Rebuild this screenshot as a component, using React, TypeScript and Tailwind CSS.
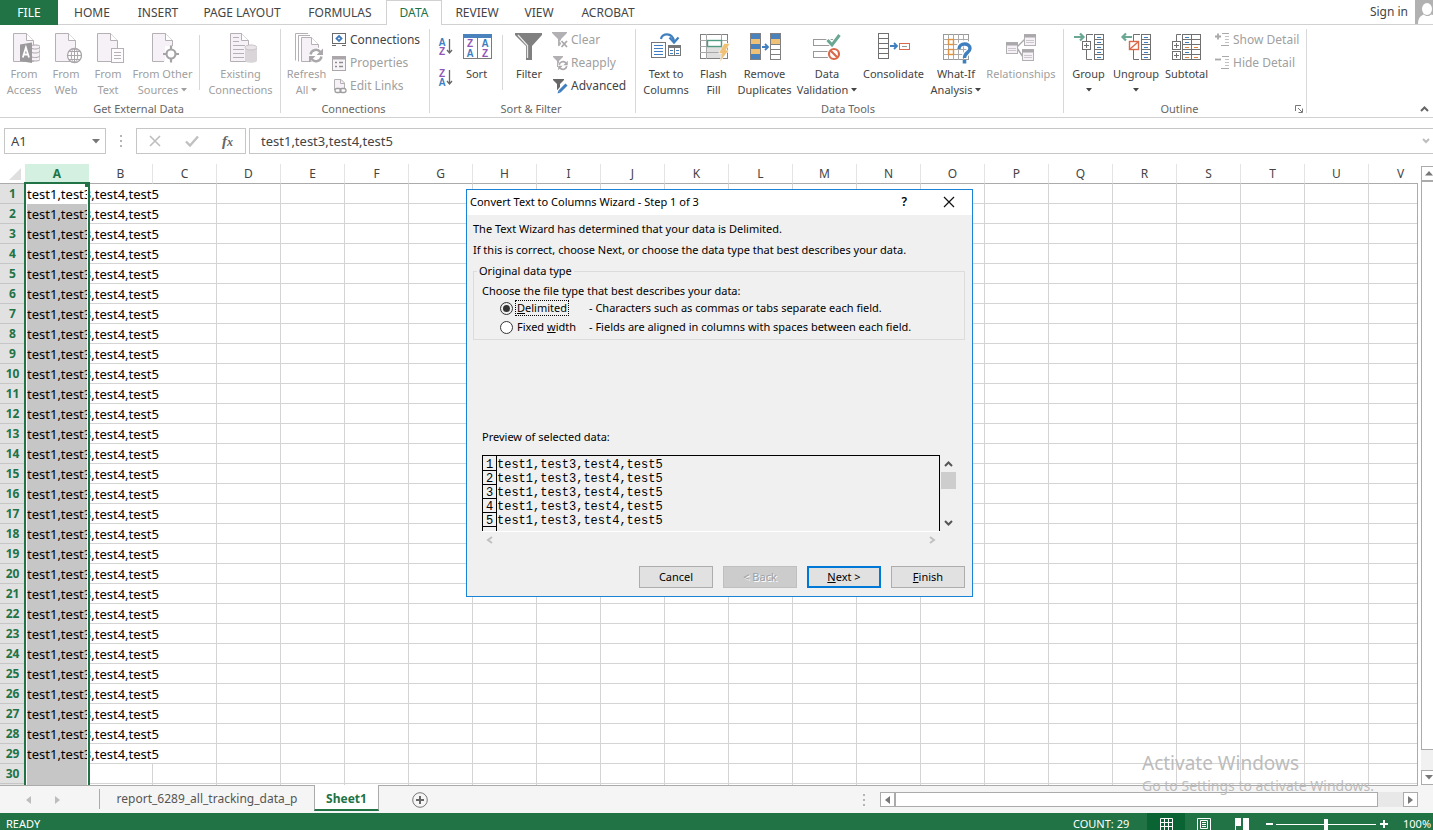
import React, { useState } from 'react';

const ROW_TEXT = 'test1,test3,test4,test5';
const FILLED_ROWS = 29;
const COLUMNS = 'ABCDEFGHIJKLMNOPQRSTUV'.split('');
const ROWS = Array.from({ length: 31 }, (_, i) => i + 1);

const TABS = [
  { label: 'HOME', width: 'w-[68px]' },
  { label: 'INSERT', width: 'w-16' },
  { label: 'PAGE LAYOUT', width: 'w-[104px]' },
  { label: 'FORMULAS', width: 'w-[92px]' },
  { label: 'DATA', width: 'w-14' },
  { label: 'REVIEW', width: 'w-[70px]' },
  { label: 'VIEW', width: 'w-[54px]' },
  { label: 'ACROBAT', width: 'w-[84px]' },
];

/* ---------- icons ---------- */

type IconProps = { children: React.ReactNode; size?: number };

const Svg = ({ children, size = 32 }: IconProps) => (
  <svg width={size} height={size} viewBox={`0 0 ${size} ${size}`} fill="none" className="shrink-0" aria-hidden="true">
    {children}
  </svg>
);

const Doc = () => (
  <>
    <path d="M5.5 1.5H18.5L25.5 8.5V29.5H5.5Z" fill="#f5f1f6" stroke="#b4b0b4" />
    <path d="M18.5 1.5V8.5H25.5" fill="#fff" stroke="#b4b0b4" />
  </>
);

const AccessIcon = () => (
  <Svg>
    <Doc />
    <path d="M23 14.5C23 12.5 32 12.5 32 14.5V27.5C32 29.5 23 29.5 23 27.5Z" fill="#f5f1f6" stroke="#a8a4a8" />
    <path d="M23 16C25 17.5 31 17.5 32 15M23 20C25 21.5 31 21.5 32 19M23 24.5C25 26 31 26 32 23.5" stroke="#a8a4a8" />
    <path d="M12 12.5L24 10.5V31L12 29Z" fill="#9b999b" />
    <path d="M14.8 25.5L17.9 15.5L21 25.5M15.8 22.5H20" stroke="#fff" strokeWidth="1.8" />
  </Svg>
);

const WebIcon = () => (
  <Svg>
    <Doc />
    <circle cx="24.5" cy="23.5" r="7" fill="#fff" stroke="#aaa6aa" strokeWidth="1.3" />
    <ellipse cx="24.5" cy="23.5" rx="3.2" ry="7" stroke="#aaa6aa" />
    <path d="M24.5 16.5V30.5M17.5 23.5H31.5M18.8 19.5H30.2M18.8 27.5H30.2" stroke="#aaa6aa" />
  </Svg>
);

const TextIcon = () => (
  <Svg>
    <Doc />
    <rect x="19.5" y="16.5" width="12" height="14" fill="#fdfbfd" stroke="#b4b0b4" />
    <path d="M22 20.5H29M22 23.5H29M22 26.5H29" stroke="#b4b0b4" />
  </Svg>
);

const SourcesIcon = () => (
  <Svg>
    <Doc />
    <path d="M17 14H31V31H17Z" fill="#fff" />
    <path d="M17.5 14V29.5" stroke="#f5f1f6" />
    <circle cx="24" cy="22" r="4.5" fill="#fff" stroke="#a5a3a5" strokeWidth="2.2" />
    <path d="M24 13.5V18M24 26V30.5M16 22H20M28 22H32" stroke="#a5a3a5" strokeWidth="2.2" />
  </Svg>
);

const ExistingIcon = () => (
  <Svg>
    <path d="M5.5 1.5H16.5L23.5 8.5V29.5H5.5Z" fill="#f5f1f6" stroke="#b4b0b4" />
    <path d="M16.5 1.5V8.5H23.5" fill="#fff" stroke="#b4b0b4" />
    <path d="M8 5.5H14M8 9.5H14M8 13.5H20M8 17.5H19M8 21.5H19M8 25.5H19" stroke="#b4b0b4" />
    <path d="M20 15.5V28.5C20 31.5 32 31.5 32 28.5V15.5Z" fill="#d9d5d9" />
    <ellipse cx="26" cy="15.5" rx="6" ry="2.5" fill="#e8e4e8" stroke="#c6c2c6" />
  </Svg>
);

const Cycle = ({ x, y, s = 1 }: { x: number; y: number; s?: number }) => (
  <g transform={`translate(${x} ${y}) scale(${s})`}>
    <path d="M-5.5 -1A5.6 5.6 0 0 1 4.4 -3.6M5.5 1A5.6 5.6 0 0 1 -4.4 3.6" stroke="#aaa8aa" strokeWidth="2.4" />
    <path d="M7 -7V-0.5H0.5ZM-7 7V0.5H-0.5Z" fill="#aaa8aa" />
  </g>
);

const RefreshIcon = () => (
  <Svg>
    <path d="M4.5 28.5V1.5H17M7.5 29.5V3.5H19" stroke="#b4b0b4" />
    <path d="M10.5 5.5H20.5L27.5 12.5V29.5H10.5Z" fill="#f5f1f6" stroke="#b4b0b4" />
    <path d="M20.5 5.5V12.5H27.5" fill="#fff" stroke="#b4b0b4" />
    <circle cx="26" cy="23.5" r="8" fill="#fff" />
    <Cycle x={25} y={23.5} />
  </Svg>
);

const ConnectionsIcon = () => (
  <Svg size={16}>
    <rect x="1.5" y="1.5" width="13" height="10" fill="#fff" stroke="#6a6a6a" />
    <path d="M1 13.5H5M11 13.5H15" stroke="#6a6a6a" />
    <path d="M8 4L10.5 6.5L8 9L5.5 6.5Z" stroke="#3f7abb" strokeWidth="1.8" />
  </Svg>
);

const PropertiesIcon = () => (
  <Svg size={16}>
    <rect x="1.5" y="1.5" width="13" height="14" fill="#f8f5f8" stroke="#aaa6aa" />
    <path d="M1 3H15" stroke="#aaa6aa" strokeWidth="3" />
    <path d="M4 7.5H6M4 11.5H6M8 7.5H12M8 11.5H12" stroke="#8f8c8f" strokeWidth="1.4" />
  </Svg>
);

const LinksIcon = () => (
  <Svg size={16}>
    <path d="M3.5 12V1.5H10L13.5 5V10" fill="#f5f1f6" stroke="#b4b0b4" />
    <path d="M9.5 1.5V5.5H13.5" stroke="#b4b0b4" />
    <rect x="4" y="10.5" width="6" height="4" rx="2" fill="#fff" stroke="#a09da0" strokeWidth="1.3" />
    <rect x="9" y="10.5" width="6" height="4" rx="2" stroke="#a09da0" strokeWidth="1.3" />
  </Svg>
);

const Glyph = ({ x, y, letter }: { x: number; y: number; letter: 'A' | 'Z' }) => (
  <text
    x={x}
    y={y}
    fontSize="10"
    fontWeight="700"
    textAnchor="middle"
    fill={letter === 'A' ? '#3f7fbf' : '#9055b5'}
    fontFamily="Liberation Sans, sans-serif"
  >
    {letter}
  </text>
);

const SortOrderIcon = ({ descending = false }: { descending?: boolean }) => (
  <svg width="16" height="20" viewBox="0 0 16 20" fill="none" aria-hidden="true">
    <Glyph x={4} y={9} letter={descending ? 'Z' : 'A'} />
    <Glyph x={4} y={18} letter={descending ? 'A' : 'Z'} />
    <path d="M11.5 2V16M9 13L11.5 16L14 13" stroke="#666" strokeWidth="1.3" />
  </svg>
);

const SortIcon = () => (
  <Svg>
    <rect x="2.5" y="2.5" width="28" height="24" fill="#fff" stroke="#7a7a7a" />
    <path d="M2 4H31" stroke="#4a82bd" strokeWidth="4" />
    <path d="M16.5 6V26" stroke="#7a7a7a" />
    <Glyph x={9} y={15} letter="Z" />
    <Glyph x={9} y={25} letter="A" />
    <Glyph x={24} y={15} letter="A" />
    <Glyph x={24} y={25} letter="Z" />
  </Svg>
);

const FilterIcon = () => (
  <Svg>
    <path d="M2 1H29V3L19 14V28H13V14L2 3Z" fill="#808080" />
    <path d="M5 3L14.5 13.5V26" stroke="#e8e8e8" strokeWidth="1.3" />
  </Svg>
);

const ClearIcon = () => (
  <Svg size={16}>
    <path d="M0 0H15V1L9 7V14H6V7L0 1Z" fill="#b3b0b3" />
    <path d="M9 8L15 15M15 8L9 15" stroke="#fff" strokeWidth="4" />
    <path d="M9.5 9L15 15M15 9L9.5 15" stroke="#aaa8aa" strokeWidth="1.8" />
  </Svg>
);

const ReapplyIcon = () => (
  <Svg size={16}>
    <path d="M1 1H11V2L7 6V12H5V6L1 2Z" fill="#b3b0b3" />
    <circle cx="11" cy="10.5" r="5" fill="#fff" />
    <Cycle x={11} y={10.5} s={0.68} />
  </Svg>
);

const AdvancedIcon = () => (
  <Svg size={16}>
    <path d="M1 1H12V2L8 6V12H5V6L1 2Z" fill="#666" />
    <path d="M6 15L15 5" stroke="#fff" strokeWidth="5" />
    <path d="M7.5 13.5L14.5 6.5" stroke="#3f7fbf" strokeWidth="3" />
    <path d="M5.5 15.5L6.5 12.5L8.5 14.5Z" fill="#3f7fbf" />
  </Svg>
);

const TextToColumnsIcon = () => (
  <Svg>
    <path d="M11 7C12 1 22 0 24 9" stroke="#3f7fbf" strokeWidth="2.2" />
    <path d="M19.5 5.5L24 10.5L28.5 5.5" stroke="#3f7fbf" strokeWidth="2.2" />
    <rect x="1.5" y="10.5" width="14" height="15" fill="#fff" stroke="#777" />
    <path d="M4 13.5H13M4 16.5H13M4 19.5H13M4 22.5H13" stroke="#3f7fbf" />
    <rect x="18.5" y="13.5" width="12" height="10" fill="#fff" stroke="#777" />
    <path d="M18 14.5H31" stroke="#777" strokeWidth="3" />
    <path d="M24.5 14V24" stroke="#777" />
    <path d="M20 18.5H23M26 18.5H29M20 21.5H23M26 21.5H29" stroke="#3f7fbf" />
  </Svg>
);

const FlashFillIcon = () => (
  <Svg>
    <rect x="2.5" y="2.5" width="27" height="24" fill="#fff" stroke="#808080" />
    <rect x="9" y="15" width="14" height="11" fill="#dedede" />
    <path d="M2 8.5H30M2 14.5H30M2 20.5H30M8.5 2V27M23.5 2V27" stroke="#a8a8a8" />
    <rect x="9.5" y="8.5" width="14" height="6" fill="#fff" stroke="#4f9c82" strokeWidth="1.4" />
    <path d="M26 11.5H32L28 18H31L21.5 30.5L24 21.5H20.5Z" fill="#eec177" stroke="#fff" strokeWidth="0.6" />
  </Svg>
);

const RemoveDuplicatesIcon = () => (
  <Svg>
    <rect x="1.5" y="1.5" width="10" height="26" fill="#4a82bd" stroke="#808080" />
    <path d="M2 7H11V12H2ZM2 17H11V22H2Z" fill="#eec177" />
    <path d="M13 15H19M16 12L19 15L16 18" stroke="#3f7fbf" strokeWidth="1.8" />
    <rect x="21.5" y="1.5" width="10" height="26" fill="#fff" stroke="#808080" />
    <path d="M22 2H31V7H22Z" fill="#4a82bd" />
    <path d="M22 7H31V12H22Z" fill="#eec177" />
    <path d="M22 12.5H31M22 17.5H31M22 22.5H31" stroke="#808080" />
  </Svg>
);

const DataValidationIcon = () => (
  <Svg>
    <rect x="2.5" y="7.5" width="20" height="6" fill="#fff" stroke="#999" />
    <rect x="2.5" y="19.5" width="16" height="6" fill="#fff" stroke="#999" />
    <path d="M16 7L21 13L29 2.5" stroke="#fff" strokeWidth="5" />
    <path d="M16.5 8L21 13L28.5 3" stroke="#6aa892" strokeWidth="3" />
    <circle cx="23" cy="22" r="7" fill="#fff" />
    <circle cx="23" cy="22" r="5" stroke="#d9694a" strokeWidth="2.2" />
    <path d="M19.5 18.5L26.5 25.5" stroke="#d9694a" strokeWidth="2.2" />
  </Svg>
);

const ConsolidateIcon = () => (
  <Svg>
    <rect x="0.5" y="1.5" width="10" height="25" fill="#fff" stroke="#707070" />
    <path d="M0 6.5H11M0 11.5H11M0 16.5H11M0 21.5H11" stroke="#707070" />
    <path d="M12 14H18M16 11L19 14L16 17" stroke="#3f7fbf" strokeWidth="1.8" />
    <rect x="21.5" y="11.5" width="10" height="6" fill="#fff" stroke="#d9694a" />
    <path d="M24 14.5H29" stroke="#999" />
  </Svg>
);

const WhatIfIcon = () => (
  <Svg>
    <rect x="3.5" y="2.5" width="25" height="25" fill="#fff" stroke="#999" />
    <path d="M3 7.5H29M3 12.5H29M3 17.5H29M3 22.5H29M8.5 2V28M13.5 2V28M18.5 2V28M23.5 2V28" stroke="#aaa" />
    <rect x="8.5" y="7.5" width="5" height="5" fill="#fff" stroke="#e0923f" strokeWidth="1.4" />
    <rect x="8.5" y="17.5" width="5" height="5" fill="#fff" stroke="#e0923f" strokeWidth="1.4" />
    <path d="M19 17C19 9 30 10 30 16.5C30 21 24.5 20 24.5 26M24.5 28V31" stroke="#fff" strokeWidth="6" />
    <path d="M19 17C19 10.5 30 10.5 30 16.5C30 20.5 24.5 20.5 24.5 26" stroke="#3f7fbf" strokeWidth="3.4" />
    <path d="M24.5 28V31.5" stroke="#3f7fbf" strokeWidth="3.6" />
  </Svg>
);

const RelationshipsIcon = () => (
  <Svg>
    <path d="M12 15L20 7M12 16L18 25" stroke="#aaa8aa" strokeWidth="1.4" />
    <g fill="#f5f1f6" stroke="#b3b0b3">
      <rect x="1.5" y="10.5" width="11" height="11" />
      <rect x="19.5" y="2.5" width="11" height="11" />
      <rect x="17.5" y="17.5" width="11" height="11" />
    </g>
    <path d="M1 12H13M19 4H31M17 19H29" stroke="#aaa8aa" strokeWidth="3" />
    <path d="M3 16.5H11M3 18.5H11M21 8.5H29M21 10.5H29M19 23.5H27M19 25.5H27" stroke="#cbc8cb" />
  </Svg>
);

const OutlineRows = () => (
  <>
    <path d="M20 2.5H13.5V9M13.5 18V27.5H19" stroke="#707070" />
    <rect x="21.5" y="2.5" width="9" height="25" fill="#fff" stroke="#707070" />
    <path d="M21 7.5H31M21 12.5H31M21 17.5H31M21 22.5H31" stroke="#707070" />
    <path d="M24 5.5H28M24 10.5H28M24 15.5H28M24 20.5H28M24 25.5H28" stroke="#3f7fbf" />
  </>
);

const GroupIcon = () => (
  <Svg>
    <OutlineRows />
    <path d="M1 5H10M7 1.5L10.5 5L7 8.5" stroke="#6aa892" strokeWidth="2.2" />
    <rect x="9.5" y="9.5" width="8" height="8" fill="#fff" stroke="#707070" />
    <path d="M11 13.5H16M13.5 11V16" stroke="#707070" />
  </Svg>
);

const UngroupIcon = () => (
  <Svg>
    <OutlineRows />
    <path d="M2.5 5H12M6 1.5L2.5 5L6 8.5" stroke="#6aa892" strokeWidth="2.2" />
    <rect x="9.5" y="9.5" width="9" height="8" fill="#fff" stroke="#d9694a" strokeWidth="1.4" />
    <path d="M10 17L18 10" stroke="#d9694a" strokeWidth="1.4" />
  </Svg>
);

const SubtotalIcon = () => (
  <Svg>
    <path d="M10 2.5H5.5V9M10 17.5H5.5" stroke="#707070" />
    <rect x="11.5" y="2.5" width="18" height="25" fill="#fff" stroke="#707070" />
    <path d="M11 7.5H30M11 12.5H30M11 17.5H30M11 22.5H30M20.5 2V28" stroke="#707070" />
    <path d="M14 5.5H18M14 10.5H18M14 20.5H18" stroke="#3f7fbf" />
    <path d="M14 15.5H18M23 15.5H27M14 25.5H18M23 25.5H27" stroke="#e0823f" />
    <rect x="1.5" y="9.5" width="8" height="8" fill="#fff" stroke="#707070" />
    <rect x="1.5" y="19.5" width="8" height="8" fill="#fff" stroke="#707070" />
    <path d="M3 13.5H8M5.5 11V16M3 23.5H8M5.5 21V26" stroke="#707070" />
  </Svg>
);

const DetailIcon = ({ plus = false }: { plus?: boolean }) => (
  <Svg size={16}>
    <path d={plus ? 'M1 4.5H7M4 1.5V7.5' : 'M1 4.5H7'} stroke="#aaa8aa" strokeWidth="1.8" />
    <path d="M8 1.5H15M7 13.5H15" stroke="#aaa8aa" />
    <path d="M11 4.5H15M11 7.5H15M11 10.5H15" stroke="#c4c2c4" />
  </Svg>
);

const Caret = () => (
  <svg width="6" height="4" viewBox="0 0 6 4" className="inline-block shrink-0" aria-hidden="true">
    <path d="M0 0H6L3 3.5Z" fill="currentColor" />
  </svg>
);

/* ---------- ribbon ---------- */

type BigButtonProps = {
  icon: React.ReactNode;
  lines: string[];
  width: string;
  caret?: boolean;
  disabled?: boolean;
};

const BigButton = ({ icon, lines, width, caret, disabled }: BigButtonProps) => (
  <button
    type="button"
    disabled={disabled}
    className={`${width} flex shrink-0 flex-col items-center pt-[7px] text-[11px] leading-4 text-[#444] disabled:text-[#a0a0a0]`}
  >
    {icon}
    <span className="mt-[2px] whitespace-nowrap">{lines[0]}</span>
    <span className="flex h-4 items-center gap-[3px] whitespace-nowrap">
      {lines[1]}
      {caret && <Caret />}
    </span>
  </button>
);

type SmallButtonProps = { icon: React.ReactNode; label: string; disabled?: boolean };

const SmallButton = ({ icon, label, disabled }: SmallButtonProps) => (
  <button
    type="button"
    disabled={disabled}
    className="flex h-[23px] items-center gap-[3px] whitespace-nowrap text-xs text-[#444] disabled:text-[#a0a0a0]"
  >
    {icon}
    {label}
  </button>
);

const Divider = () => <div className="mx-[3px] mt-[10px] h-[55px] w-px shrink-0 bg-[#d8d8d8]" />;

type GroupProps = { title: string; width: string; launcher?: boolean; children: React.ReactNode };

const RibbonGroup = ({ title, width, launcher, children }: GroupProps) => (
  <section className={`${width} flex shrink-0 flex-col`}>
    <div className="flex h-[88px]">
      <div className="flex h-[76px] min-w-0 flex-1">{children}</div>
      <div className="mt-1 h-[84px] w-px bg-[#d8d8d8]" />
    </div>
    <div className="-mt-3 flex h-4 items-center pr-1 text-[11px] text-[#666]">
      <span className="flex-1 text-center">{title}</span>
      {launcher && (
        <button type="button" aria-label={`${title} settings`}>
          <svg width="8" height="8" viewBox="0 0 8 8" fill="none" aria-hidden="true">
            <path d="M0.5 6V0.5H6M3 3L7 7M7.5 3.5V7.5H3.5" stroke="#777" />
          </svg>
        </button>
      )}
    </div>
  </section>
);

const Ribbon = () => (
  <div className="flex h-[93px] shrink-0 border-b border-[#d1d1d1] bg-white">
    <RibbonGroup title="Get External Data" width="w-[281px]">
      <div className="w-[3px]" />
      <BigButton icon={<AccessIcon />} lines={['From', 'Access']} width="w-[42px]" disabled />
      <BigButton icon={<WebIcon />} lines={['From', 'Web']} width="w-[42px]" disabled />
      <BigButton icon={<TextIcon />} lines={['From', 'Text']} width="w-[42px]" disabled />
      <BigButton icon={<SourcesIcon />} lines={['From Other', 'Sources']} width="w-[67px]" caret disabled />
      <Divider />
      <BigButton icon={<ExistingIcon />} lines={['Existing', 'Connections']} width="w-[75px]" disabled />
    </RibbonGroup>

    <RibbonGroup title="Connections" width="w-[149px]">
      <div className="w-1" />
      <BigButton icon={<RefreshIcon />} lines={['Refresh', 'All']} width="w-[43px]" caret disabled />
      <div className="flex flex-col pt-[3px] pl-[3px]">
        <SmallButton icon={<ConnectionsIcon />} label="Connections" />
        <SmallButton icon={<PropertiesIcon />} label="Properties" disabled />
        <SmallButton icon={<LinksIcon />} label="Edit Links" disabled />
      </div>
    </RibbonGroup>

    <RibbonGroup title="Sort & Filter" width="w-[206px]">
      <div className="flex w-6 flex-col items-end gap-[11px] pt-3">
        <button type="button" aria-label="Sort A to Z"><SortOrderIcon /></button>
        <button type="button" aria-label="Sort Z to A"><SortOrderIcon descending /></button>
      </div>
      <BigButton icon={<SortIcon />} lines={['Sort']} width="w-[45px]" />
      <Divider />
      <BigButton icon={<FilterIcon />} lines={['Filter']} width="w-[46px]" />
      <div className="flex flex-col pt-[3px]">
        <SmallButton icon={<ClearIcon />} label="Clear" disabled />
        <SmallButton icon={<ReapplyIcon />} label="Reapply" disabled />
        <SmallButton icon={<AdvancedIcon />} label="Advanced" />
      </div>
    </RibbonGroup>

    <RibbonGroup title="Data Tools" width="w-[428px]">
      <div className="w-1" />
      <BigButton icon={<TextToColumnsIcon />} lines={['Text to', 'Columns']} width="w-[52px]" />
      <BigButton icon={<FlashFillIcon />} lines={['Flash', 'Fill']} width="w-[43px]" />
      <BigButton icon={<RemoveDuplicatesIcon />} lines={['Remove', 'Duplicates']} width="w-[59px]" />
      <BigButton icon={<DataValidationIcon />} lines={['Data', 'Validation']} width="w-[66px]" caret />
      <BigButton icon={<ConsolidateIcon />} lines={['Consolidate']} width="w-[67px]" />
      <BigButton icon={<WhatIfIcon />} lines={['What-If', 'Analysis']} width="w-[58px]" caret />
      <BigButton icon={<RelationshipsIcon />} lines={['Relationships']} width="w-[72px]" disabled />
    </RibbonGroup>

    <RibbonGroup title="Outline" width="w-[243px]" launcher>
      <div className="w-[2px]" />
      <BigButton icon={<GroupIcon />} lines={['Group', '']} width="w-[45px]" caret />
      <BigButton icon={<UngroupIcon />} lines={['Ungroup', '']} width="w-[50px]" caret />
      <BigButton icon={<SubtotalIcon />} lines={['Subtotal']} width="w-[51px]" />
      <div className="flex flex-col pt-[3px] pl-[2px]">
        <SmallButton icon={<DetailIcon plus />} label="Show Detail" disabled />
        <SmallButton icon={<DetailIcon />} label="Hide Detail" disabled />
      </div>
    </RibbonGroup>

    <button type="button" aria-label="Collapse the ribbon" className="mt-auto mr-1 mb-[5px] ml-auto">
      <svg width="9" height="6" viewBox="0 0 9 6" fill="none" aria-hidden="true">
        <path d="M1 5L4.5 1.5L8 5" stroke="#666" strokeWidth="2" />
      </svg>
    </button>
  </div>
);

const TabStrip = () => {
  const [active, setActive] = useState('DATA');
  return (
    <nav className="flex h-[25px] shrink-0 bg-white text-xs text-[#444]">
      <button type="button" className="w-[58px] bg-[#217346] text-white">FILE</button>
      {TABS.map((tab) => (
        <button
          key={tab.label}
          type="button"
          onClick={() => setActive(tab.label)}
          className={`${tab.width} whitespace-nowrap ${
            tab.label === active
              ? 'border border-b-0 border-[#d1d1d1] text-[#217346]'
              : 'border-b border-[#d1d1d1] pt-px'
          }`}
        >
          {tab.label}
        </button>
      ))}
      <div className="flex flex-1 justify-end border-b border-[#d1d1d1]">
        <a href="#signin" className="mr-[7px] leading-6">Sign in</a>
        <svg width="18" height="24" viewBox="0 0 18 24" aria-hidden="true">
          <rect width="18" height="24" fill="#b1b1b1" />
          <ellipse cx="12" cy="9" rx="5" ry="6" fill="#fff" />
          <path d="M3 24C3 17 7 15 9 14.5C11 16.5 14 16.5 16 14.5L18 15V24Z" fill="#fff" />
        </svg>
      </div>
    </nav>
  );
};

const FormulaBar = () => (
  <div className="flex shrink-0 bg-white py-[10px] pl-1 text-[13px] text-[#444]">
    <div className="flex h-[26px] w-[102px] items-center border border-[#c6c6c6] pr-[5px]">
      <input aria-label="Name box" defaultValue="A1" className="min-w-0 flex-1 pt-[2px] pl-[6px] outline-none" />
      <button type="button" aria-label="Name list" className="text-[#777]">
        <svg width="8" height="5" viewBox="0 0 8 5" aria-hidden="true"><path d="M0 0H8L4 4.5Z" fill="currentColor" /></svg>
      </button>
    </div>
    <div className="flex w-[30px] flex-col items-center justify-center gap-[3px]">
      <i className="size-[2px] bg-[#b5b5b5]" />
      <i className="size-[2px] bg-[#b5b5b5]" />
      <i className="size-[2px] bg-[#b5b5b5]" />
    </div>
    <div className="flex h-[26px] w-[110px] items-center justify-between border border-[#c6c6c6] pr-3 pl-3">
      <button type="button" aria-label="Cancel entry">
        <svg width="12" height="12" viewBox="0 0 12 12" fill="none"><path d="M1 1L11 11M11 1L1 11" stroke="#bdbdbd" strokeWidth="1.6" /></svg>
      </button>
      <button type="button" aria-label="Accept entry">
        <svg width="14" height="12" viewBox="0 0 14 12" fill="none"><path d="M1 6.5L5 10.5L13 1.5" stroke="#c0c0c0" strokeWidth="2.4" /></svg>
      </button>
      <button type="button" className="font-['Liberation_Serif',serif] text-[15px] leading-5 font-bold text-[#666] italic">
        f<span className="text-xs">x</span>
      </button>
    </div>
    <div className="ml-[3px] flex h-[26px] flex-1 items-center border border-r-0 border-[#c6c6c6] pr-[3px]">
      <input aria-label="Formula" defaultValue={ROW_TEXT} className="min-w-0 flex-1 pt-[2px] pl-[11px] outline-none" />
      <svg width="8" height="6" viewBox="0 0 8 6" fill="none" aria-hidden="true">
        <path d="M1 1L4 4L7 1" stroke="#bdbdbd" strokeWidth="2" />
      </svg>
    </div>
  </div>
);

/* ---------- sheet ---------- */

const Sheet = () => (
  <main className="flex min-h-0 flex-1 overflow-hidden bg-white">
    <div className="relative min-w-0 flex-1 overflow-hidden">
      <table className="w-[1433px] table-fixed border-separate border-spacing-0 text-[13px] leading-[19px]">
        <thead>
          <tr>
            <th className="h-5 w-[25px] border-b border-[#ababab] p-0">
              <svg width="12" height="12" viewBox="0 0 12 12" className="ml-[9px]" aria-hidden="true">
                <path d="M12 0V12H0Z" fill="#dfdfdf" />
              </svg>
            </th>
            {COLUMNS.map((col) => (
              <th
                key={col}
                scope="col"
                className={`h-5 w-16 border-b p-0 text-xs ${
                  col === 'A'
                    ? 'border-[#217346] bg-[#d3f0e0] font-bold text-[#217346]'
                    : 'border-r border-r-[#e4e4e4] border-b-[#ababab] font-normal text-[#444]'
                }`}
              >
                {col}
              </th>
            ))}
          </tr>
        </thead>
        <tbody>
          {ROWS.map((row) => (
            <tr key={row}>
              <th scope="row" className="h-5 border-b border-[#c6c6c6] bg-[#e1e1e1] p-0 text-center text-xs leading-[19px] font-bold text-[#217346]">
                {row}
              </th>
              {COLUMNS.map((col) => {
                const filled = row <= FILLED_ROWS;
                if (col === 'A') {
                  return (
                    <td key={col} className={`h-5 p-0 pl-[2px] whitespace-nowrap text-black ${row > 1 ? 'bg-[#c6c6c6]' : ''}`}>
                      {filled && ROW_TEXT}
                    </td>
                  );
                }
                // text spills over B, so its right gridline is hidden on filled rows
                const spill = filled && col === 'B';
                return <td key={col} className={`h-5 border-b border-[#d4d4d4] p-0 ${spill ? '' : 'border-r'}`} />;
              })}
            </tr>
          ))}
        </tbody>
      </table>
      <div className="pointer-events-none absolute top-[18px] bottom-0 left-6 w-[66px] border-2 border-b-0 border-[#217346] shadow-[inset_1px_0_0_#fff,inset_-1px_0_0_#fff]">
        <div className="absolute -top-[2px] -right-[2px] size-[5px] bg-[#217346]" />
      </div>
      <div className="pointer-events-none absolute top-[19px] right-0 bottom-0 w-px bg-[#ababab]" />
    </div>
    <div className="ml-[3px] flex w-3 shrink-0 flex-col overflow-hidden bg-[#f1f1f1]">
      <div className="h-[2px] shrink-0 bg-white" />
      <button type="button" aria-label="Scroll up" className="flex h-[15px] w-4 shrink-0 items-center justify-center border border-[#ababab] bg-white text-[#777]">
        <svg width="8" height="5" viewBox="0 0 8 5"><path d="M0 4.5H8L4 0Z" fill="currentColor" /></svg>
      </button>
      <div className="mb-5 w-4 flex-1 border border-[#ababab] bg-white" />
      <button type="button" aria-label="Scroll down" className="flex h-[15px] w-4 shrink-0 items-center justify-center border border-[#ababab] bg-white text-[#777]">
        <svg width="8" height="5" viewBox="0 0 8 5"><path d="M0 0H8L4 4.5Z" fill="currentColor" /></svg>
      </button>
    </div>
  </main>
);

const SheetTabs = () => (
  <div className="flex h-7 shrink-0 bg-[#f5f5f5] text-xs text-[#555]">
    <div className="flex min-w-0 flex-1 border-t border-[#ababab]">
      <div className="flex w-[99px] items-center gap-6 pl-[26px] text-[#bdbdbd]">
        <button type="button" aria-label="Previous sheet">
          <svg width="5" height="8" viewBox="0 0 5 8"><path d="M5 0V8L0 4Z" fill="currentColor" /></svg>
        </button>
        <button type="button" aria-label="Next sheet">
          <svg width="5" height="8" viewBox="0 0 5 8"><path d="M0 0V8L5 4Z" fill="currentColor" /></svg>
        </button>
      </div>
      <div className="mt-[3px] h-5 w-px bg-[#ababab]" />
      <button type="button" className="h-[26px] w-[214px] whitespace-nowrap">report_6289_all_tracking_data_p</button>
      <button type="button" className="-mt-px h-[26px] w-[65px] border-x border-b-2 border-x-[#ababab] border-b-[#217346] bg-white pt-[3px] font-bold text-[#217346]">
        Sheet1
      </button>
      <button type="button" aria-label="New sheet" className="ml-[33px] self-center">
        <svg width="16" height="16" viewBox="0 0 16 16" fill="none">
          <circle cx="8" cy="8" r="7.3" stroke="#777" />
          <path d="M4 8H12M8 4V12" stroke="#666" strokeWidth="2" />
        </svg>
      </button>
      <div className="mr-[15px] ml-auto flex flex-col items-center justify-center gap-[3px]">
        <i className="size-[2px] bg-[#b5b5b5]" />
        <i className="size-[2px] bg-[#b5b5b5]" />
        <i className="size-[2px] bg-[#b5b5b5]" />
      </div>
      <div className="mt-[6px] flex h-[15px] w-[538px] bg-[#e8e8e8]">
        <button type="button" aria-label="Scroll left" className="flex w-[15px] items-center justify-center border border-[#ababab] bg-white text-[#777]">
          <svg width="5" height="8" viewBox="0 0 5 8"><path d="M5 0V8L0 4Z" fill="currentColor" /></svg>
        </button>
        <div className="mr-[25px] flex-1 border border-[#ababab] bg-white" />
        <button type="button" aria-label="Scroll right" className="flex w-[15px] items-center justify-center border border-[#ababab] bg-white text-[#777]">
          <svg width="5" height="8" viewBox="0 0 5 8"><path d="M0 0V8L5 4Z" fill="currentColor" /></svg>
        </button>
      </div>
    </div>
    <div className="w-[15px]" />
  </div>
);

const StatusBar = () => (
  <footer className="h-[17px] shrink-0 overflow-hidden bg-[#217346] text-[11px] text-white">
    <div className="flex h-[22px] items-center">
      <span className="flex-1 pl-[6px]">READY</span>
      <span className="w-[74px]">COUNT: 29</span>
      <button type="button" aria-label="Normal view" className="flex h-full w-[38px] items-center justify-center bg-[#0a6332]">
        <svg width="13" height="13" viewBox="0 0 13 13" fill="none">
          <path d="M0.5 0.5H12.5V12.5H0.5ZM4.5 0V13M8.5 0V13M0 4.5H13M0 8.5H13" stroke="#fff" />
        </svg>
      </button>
      <button type="button" aria-label="Page layout view" className="flex w-[38px] items-center justify-center">
        <svg width="14" height="13" viewBox="0 0 14 13" fill="none">
          <path d="M0.5 0.5H13.5V12.5H0.5ZM3.5 2.5H10.5V10.5H3.5ZM5 4.5H9M5 6.5H9M5 8.5H9" stroke="#fff" />
        </svg>
      </button>
      <button type="button" aria-label="Page break preview" className="flex w-[38px] items-center justify-center">
        <svg width="14" height="13" viewBox="0 0 14 13" fill="none">
          <path d="M0 0H6V8H0ZM8 0H14V12H8Z" fill="#fff" />
          <path d="M0.5 8V12.5H8" stroke="#fff" />
        </svg>
      </button>
      <button type="button" aria-label="Zoom out" className="ml-[5px] flex w-[10px] justify-start">
        <svg width="7" height="2"><rect width="7" height="2" fill="#fff" /></svg>
      </button>
      <div className="flex h-[11px] w-[100px] items-center justify-center bg-[linear-gradient(#fff,#fff)] bg-[length:100%_1px] bg-center bg-no-repeat">
        <div className="h-[11px] w-1 bg-white" />
      </div>
      <button type="button" aria-label="Zoom in" className="ml-1">
        <svg width="8" height="8" viewBox="0 0 8 8"><path d="M0 3H8V5H0ZM3 0H5V8H3Z" fill="#fff" /></svg>
      </button>
      <span className="w-[45px] pl-[15px]">100%</span>
    </div>
  </footer>
);

/* ---------- wizard dialog ---------- */

type DataType = 'delimited' | 'fixed';

const BUTTON = 'h-[22px] w-[74px] border text-[11px] text-black';

const Wizard = () => {
  const [type, setType] = useState<DataType>('delimited');
  const radio =
    'size-[13px] shrink-0 appearance-none rounded-full border border-[#333] bg-white p-[2px] checked:bg-[#333] checked:bg-clip-content';

  return (
    <div
      role="dialog"
      aria-labelledby="wizard-title"
      className="absolute top-[189px] left-[466px] w-[507px] border border-[#1883d7] bg-[#f0f0f0] text-[11px] leading-4 text-black"
    >
      <div className="flex h-[25px] items-center bg-white pr-[17px] pb-px pl-[3px]">
        <h1 id="wizard-title" className="flex-1 text-[11px]">Convert Text to Columns Wizard - Step 1 of 3</h1>
        <button type="button" aria-label="Help" className="mr-9 text-xs font-semibold">?</button>
        <button type="button" aria-label="Close">
          <svg width="12" height="12" viewBox="0 0 12 12" fill="none"><path d="M1 1L11 11M11 1L1 11" stroke="#111" strokeWidth="1.2" /></svg>
        </button>
      </div>

      <div className="flex flex-col pt-[6px] pr-[7px] pb-2 pl-[6px]">
        <p>The Text Wizard has determined that your data is Delimited.</p>
        <p className="mt-[5px]">If this is correct, choose Next, or choose the data type that best describes your data.</p>

        <fieldset className="mt-[5px] h-[77px] border border-[#dcdcdc] px-2">
          <legend className="-ml-[5px] px-[2px]">Original data type</legend>
          <p className="mt-1">Choose the file type that best describes your data:</p>
          <div className="flex h-[18px] items-center pl-[18px]">
            <input id="delimited" name="type" type="radio" className={radio} checked={type === 'delimited'} onChange={() => setType('delimited')} />
            <label htmlFor="delimited" className="ml-[2px] h-4 border border-dotted border-black px-px leading-[14px]">
              <u>D</u>elimited
            </label>
            <span className="ml-auto w-[367px]">- Characters such as commas or tabs separate each field.</span>
          </div>
          <div className="mt-px flex h-[18px] items-center pl-[18px]">
            <input id="fixed" name="type" type="radio" className={radio} checked={type === 'fixed'} onChange={() => setType('fixed')} />
            <label htmlFor="fixed" className="ml-1">
              Fixed <u>w</u>idth
            </label>
            <span className="ml-auto w-[367px]">- Fields are aligned in columns with spaces between each field.</span>
          </div>
        </fieldset>

        <p className="mt-[89px] ml-[9px]">Preview of selected data:</p>
        <div className="mt-[10px] ml-[9px] flex">
          <div className="h-[76px] w-[458px] overflow-hidden border border-b-0 border-black">
            <table className="border-separate border-spacing-0 font-['Liberation_Mono',monospace] text-xs leading-[10px]">
              <tbody>
                <tr>
                  <td className="h-px w-[14px] border-r border-black p-0" />
                </tr>
                {[1, 2, 3, 4, 5].map((n) => (
                  <tr key={n}>
                    <th scope="row" className="w-[14px] border-r border-b border-black p-0 pt-[3px] text-center font-normal">{n}</th>
                    <td className="p-0 pt-[3px] pb-px">{ROW_TEXT}</td>
                  </tr>
                ))}
                <tr>
                  <td className="h-1 border-r border-black p-0" />
                </tr>
              </tbody>
            </table>
          </div>
          <div className="ml-px flex w-[15px] flex-col items-center pt-[6px]">
            <svg width="9" height="6" viewBox="0 0 9 6" fill="none" aria-hidden="true"><path d="M1 5L4.5 1.5L8 5" stroke="#555" strokeWidth="2" /></svg>
            <div className="mt-[5px] h-[17px] w-full bg-[#cdcdcd]" />
            <svg width="9" height="6" viewBox="0 0 9 6" fill="none" className="mt-auto mb-[5px]" aria-hidden="true"><path d="M1 1L4.5 4.5L8 1" stroke="#555" strokeWidth="2" /></svg>
          </div>
        </div>
        <div className="ml-[9px] flex h-4 w-[458px] items-center justify-between border-t border-white px-1">
          <svg width="7" height="8" viewBox="0 0 7 8" fill="none" aria-hidden="true"><path d="M6 1L2 4L6 7" stroke="#c0c0c0" strokeWidth="2" /></svg>
          <svg width="7" height="8" viewBox="0 0 7 8" fill="none" aria-hidden="true"><path d="M1 1L5 4L1 7" stroke="#c0c0c0" strokeWidth="2" /></svg>
        </div>

        <div className="mt-[19px] flex justify-end gap-[10px]">
          <button type="button" className={`${BUTTON} border-[#adadad] bg-[#e1e1e1]`}>Cancel</button>
          <button type="button" disabled className="h-[22px] w-[74px] border border-[#bfbfbf] bg-[#ccc] text-[11px] text-[#a0a0a0] [text-shadow:1px_1px_0_#fff]">
            &lt; Back
          </button>
          <button type="button" className="h-[22px] w-[74px] border-2 border-[#0078d7] bg-[#e1e1e1] text-[11px]"><u>N</u>ext &gt;</button>
          <button type="button" className={`${BUTTON} border-[#adadad] bg-[#e1e1e1]`}><u>F</u>inish</button>
        </div>
      </div>
    </div>
  );
};

const Watermark = () => (
  <div className="pointer-events-none absolute right-[54px] bottom-[33px] w-[237px] whitespace-nowrap text-[#bcbcbc]">
    <p className="text-[19px] leading-6">Activate Windows</p>
    <p className="text-sm leading-[22px]">Go to Settings to activate Windows.</p>
  </div>
);

export default function App() {
  return (
    <div className="relative flex h-screen flex-col overflow-hidden bg-white font-['Noto_Sans','Open_Sans',sans-serif]">
      <TabStrip />
      <Ribbon />
      <FormulaBar />
      <Sheet />
      <SheetTabs />
      <StatusBar />
      <Watermark />
      <Wizard />
    </div>
  );
}
